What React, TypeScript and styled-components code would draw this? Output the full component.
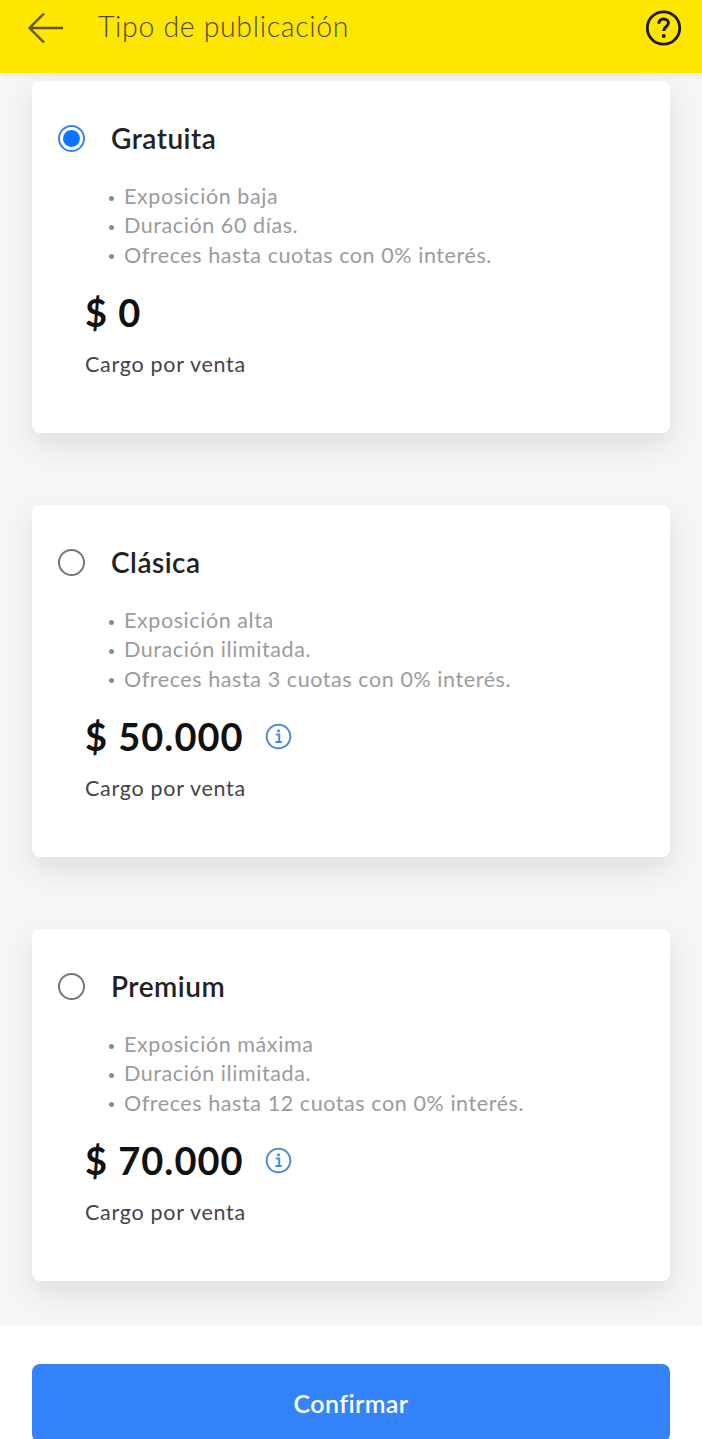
import React from "react";
import styled, { createGlobalStyle } from "styled-components";

const Global = createGlobalStyle`
  html, body { margin: 0; padding: 0; background: #f6f6f6; }
  #root { width: 702px; height: 1439px; overflow: hidden; }
  * { box-sizing: border-box; }
`;
const Page = styled.div`
  width: 702px; height: 1439px; overflow: hidden; display: flex; flex-direction: column;
  font-family: "Lato", "Liberation Sans", sans-serif; background: #f6f6f6;
`;
const Header = styled.header`
  height: 73px; flex: none; background: #ffe600; display: flex; align-items: flex-start;
  padding: 10px 20px 0 27px; color: #5c5612; position: relative; z-index: 1;
  box-shadow: 0 2px 6px rgba(0,0,0,.08);
`;
const Title = styled.h1`
  margin: -1px 0 0 35px; font-size: 28.5px; font-weight: 300; line-height: 34px; flex: 1; color: #4d4820; letter-spacing: .65px;
`;
const IconSlot = styled.span`
  display: block; flex: none; height: 36px;
`;
const List = styled.main`
  display: flex; flex-direction: column; gap: 72px; padding: 8px 32px 44px; background: #f6f6f6;
`;
const Card = styled.section`
  height: 352px; background: #fff; border-radius: 8px; padding: 44px 26px 0;
  box-shadow: 0 12px 30px rgba(0,0,0,.1);
`;
const TitleRow = styled.div`
  display: flex; align-items: center; height: 27px; gap: 26px;
`;
const Radio = styled.span<{ $on?: boolean }>`
  width: 27px; height: 27px; border-radius: 50%; flex: none; background: #fff;
  border: 2px solid ${p => (p.$on ? "#3483fa" : "#757575")};
  display: flex; align-items: center; justify-content: center;
`;
const Dot = styled.span`
  width: 17px; height: 17px; border-radius: 50%; background: #0a74ff;
`;
const Name = styled.h2`
  margin: -2px 0 0 0; font-size: 28px; font-weight: 600; color: #222; letter-spacing: .5px;
`;
const Features = styled.ul`
  list-style: none; margin: 30px 0 0 51px; padding: 0;
`;
const Feature = styled.li`
  height: 29.3px; line-height: 29.3px; font-size: 21.5px; color: #9b9b9b; letter-spacing: .58px; display: flex; align-items: center; white-space: pre;
  &::before { content: ""; width: 5px; height: 5px; border-radius: 50%; background: #8a8a8a; margin: 3px 10px 0 0; flex: none; }
`;
const PriceRow = styled.div`
  display: flex; align-items: center; margin-top: 21px; height: 42px; color: #111; margin-left: 27px;
`;
const Price = styled.span`
  font-size: 38px; font-weight: 700; line-height: 42px; letter-spacing: 1px; color: #111;
`;
const InfoSlot = styled.span`
  display: block; height: 27px; margin-left: 21px; margin-top: 1px; color: #4a8bdc;
`;
const Charge = styled.p`
  margin: 17px 0 0 27px; font-size: 21.5px; line-height: 28px; color: #444; letter-spacing: .7px;
`;
const Footer = styled.footer`
  flex: 1; background: #fff; padding: 39px 32px 0;
`;
const Button = styled.button`
  width: 100%; height: 78px; border: 0; border-radius: 8px; background: #3483fa; color: #fff;
  font-family: inherit; font-size: 25px; font-weight: 600; letter-spacing: .4px; display: block; padding: 0;
`;

const Arrow = () => (
  <svg width="36" height="36" viewBox="0 0 36 36" fill="none" stroke="currentColor" strokeWidth="2.4" style={{ display: "block" }}>
    <path d="M36 18H2.5M17 3.5 2.5 18 17 32.5" />
  </svg>
);
const Help = () => (
  <svg width="36" height="36" viewBox="0 0 36 36" fill="none" style={{ display: "block" }}>
    <circle cx="17.5" cy="18" r="16.2" stroke="#1d1a05" strokeWidth="2.8" />
    <path d="M12.8 13.8c0-3 2.1-4.9 4.8-4.9s4.8 1.8 4.8 4.2c0 3.7-4.7 3.6-4.7 7.8" stroke="#1d1a05" strokeWidth="3" />
    <circle cx="17.7" cy="26" r="2" fill="#1d1a05" />
  </svg>
);
const Info = () => (
  <svg width="27" height="27" viewBox="0 0 27 27" fill="none" style={{ display: "block" }}>
    <circle cx="13.5" cy="13.5" r="11.8" stroke="#4a8bdc" strokeWidth="2" />
    <circle cx="13.5" cy="7.8" r="1.6" fill="#4a8bdc" />
    <path d="M10.8 11.6h3.4v7.2M10.4 19h6.4" stroke="#4a8bdc" strokeWidth="2" />
  </svg>
);

const plans = [
  { name: "Gratuita", on: true, price: "$ 0", info: false, f: ["Exposición baja", "Duración 60 días.", "Ofreces hasta cuotas con 0% interés."] },
  { name: "Clásica", on: false, price: "$ 50.000", info: true, f: ["Exposición alta", "Duración ilimitada.", "Ofreces hasta 3 cuotas con 0% interés."] },
  { name: "Premium", on: false, price: "$ 70.000", info: true, f: ["Exposición máxima", "Duración ilimitada.", "Ofreces hasta 12 cuotas con 0% interés."] },
];

export default function App() {
  return (
    <Page>
      <Global />
      <Header>
        <IconSlot><Arrow /></IconSlot>
        <Title>Tipo de publicación</Title>
        <IconSlot><Help /></IconSlot>
      </Header>
      <List>
        {plans.map(p => (
          <Card key={p.name}>
            <TitleRow>
              <Radio $on={p.on}>{p.on && <Dot />}</Radio>
              <Name>{p.name}</Name>
            </TitleRow>
            <Features>
              {p.f.map(t => <Feature key={t}>{t}</Feature>)}
            </Features>
            <PriceRow>
              <Price>{p.price}</Price>
              {p.info && <InfoSlot><Info /></InfoSlot>}
            </PriceRow>
            <Charge>Cargo por venta</Charge>
          </Card>
        ))}
      </List>
      <Footer><Button>Confirmar</Button></Footer>
    </Page>
  );
}
